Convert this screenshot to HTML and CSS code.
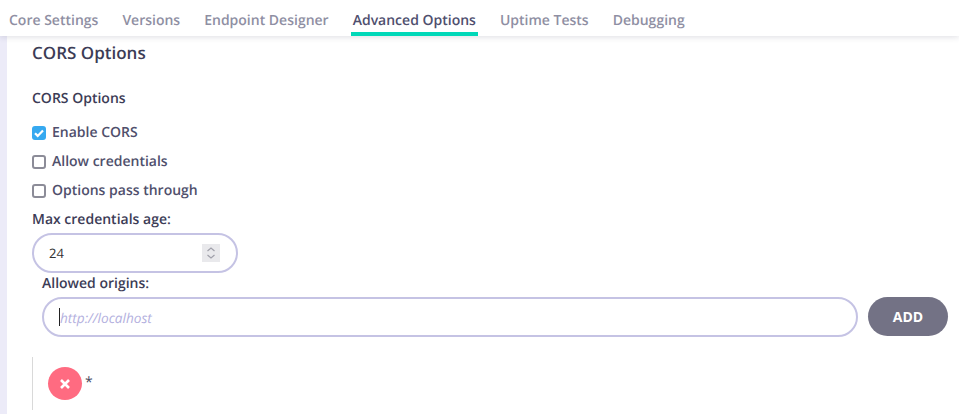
FILE: index.html
```html
<!DOCTYPE html>
<html lang="en">
<head>
<meta charset="utf-8">
<title>CORS Options</title>
<link rel="stylesheet" href="styles.css">
</head>
<body>
<nav class="tabs">
  <a class="tab">Core Settings</a>
  <a class="tab">Versions</a>
  <a class="tab">Endpoint Designer</a>
  <a class="tab active">Advanced Options</a>
  <a class="tab">Uptime Tests</a>
  <a class="tab">Debugging</a>
</nav>
<main class="page">
  <h2 class="title">CORS Options</h2>
  <h3 class="subtitle">CORS Options</h3>
  <label class="check"><span class="box on"><svg viewBox="0 0 14 14" width="14" height="14"><path d="M3 7.2l2.7 2.7L11 4.4" fill="none" stroke="#fff" stroke-width="2.200"/></svg></span>Enable CORS</label>
  <label class="check"><span class="box"></span>Allow credentials</label>
  <label class="check"><span class="box"></span>Options pass through</label>
  <div class="field-label">Max credentials age:</div>
  <div class="number-input">
    <span>24</span>
    <span class="spinner"><svg viewBox="0 0 18 18" width="18" height="18"><path d="M5.500 7l3.500-3 3.500 3M5.500 11l3.500 3 3.500-3" fill="none" stroke="#a0a0aa" stroke-width="1.200"/></svg></span>
  </div>
  <div class="origins">
    <div class="field-label origins-label">Allowed origins:</div>
    <div class="origin-row">
      <div class="text-input"><span class="caret"></span><span class="placeholder">http://localhost</span></div>
      <button class="add" type="button">ADD</button>
    </div>
  </div>
  <div class="origin-list">
    <span class="remove"><svg viewBox="0 0 12 12" width="12" height="12"><path d="M2 2l8 8M10 2l-8 8" stroke="#fff" stroke-width="2.600" fill="none"/></svg></span>
    <span class="star">*</span>
  </div>
</main>
</body>
</html>
```
FILE: styles.css
```css
* { box-sizing: border-box; }
html, body { margin: 0; height: 100%; overflow: hidden; background: #fff; }
body { font-family: "Open Sans", sans-serif; color: #34344f; font-size: 14px; font-weight: 600; text-rendering: geometricPrecision; }
.tabs {
  position: relative;
  z-index: 1;
  display: flex;
  gap: 20px;
  height: 36px;
  padding-left: 7px;
  background: #fff;
  box-shadow: 0 1px 6px rgba(50, 50, 80, .16);
}
.tab {
  height: 36px;
  padding: 12px 2px 0;
  line-height: 18px;
  color: #8f8fa3;
  white-space: nowrap;
}
.tab.active { color: #4f4f6e; border-bottom: 4px solid #00d8b8; }
.page {
  height: 378px;
  margin: 0;
  padding: 5px 11px 0 25px;
  border-left: 7px solid #ecebf8;
}
.title { margin: 0; font-size: 17px; font-weight: 600; line-height: 23px; color: #3c3c56; }
.subtitle { margin: 25px 0 0; font-size: 14px; font-weight: 600; line-height: 20px; color: #3c3c56; }
.check { display: flex; align-items: center; gap: 6px; height: 20px; margin-top: 9px; color: #50506c; line-height: 20px; }
.subtitle + .check { margin-top: 14px; }
.box { width: 14px; height: 14px; border: 2px solid #8c8c98; border-radius: 3px; flex: none; }
.box.on { background: #36a9f0; border: 0; display: block; }
.box svg { display: block; }
.field-label { margin-top: 9px; line-height: 20px; color: #3c3c56; }
.number-input {
  display: flex; align-items: center; justify-content: space-between;
  width: 206px; height: 40px; margin-top: 3px; padding: 0 16px 0 15px;
  border: 2px solid #c5c3e4; border-radius: 20px;
  font-size: 13px; font-weight: 400; color: #333;
}
.spinner { width: 18px; height: 18px; background: #e9e9ec; }
.spinner svg { display: block; }
.origins { padding: 1px 0 0 10px; }
.origins-label { margin-top: 0; line-height: 20px; }
.origin-row { display: flex; align-items: flex-start; gap: 10px; margin-top: 3px; }
.text-input {
  display: flex; align-items: center; flex: 1; height: 40px; padding-left: 15px;
  border: 2px solid #c5c3e4; border-radius: 20px;
}
.caret { width: 1px; height: 18px; background: #222; }
.placeholder { font-size: 13.600px; font-style: italic; font-weight: 400; color: #b3b0de; }
.add {
  width: 80px; height: 39px; border: 0; border-radius: 20px;
  background: #737285; color: #fff;
  font: 700 14px "Open Sans", sans-serif;
}
.origin-list {
  display: flex; align-items: center; gap: 3px;
  height: 53px; margin-top: 20px; padding-left: 15px;
  border-left: 1px solid #d9d9d9;
}
.remove { display: flex; align-items: center; justify-content: center; width: 34px; height: 33px; border-radius: 50%; background: #ff6b81; }
.star { margin-top: -3px; color: #4a4a5c; font-weight: 400; }
```
